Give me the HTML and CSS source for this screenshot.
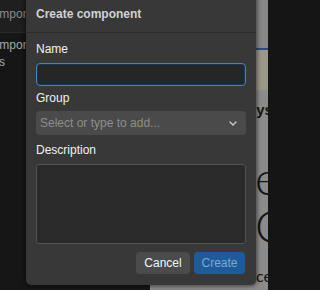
FILE: index.html
```html
<!DOCTYPE html>
<html lang="en">
<head>
<meta charset="utf-8">
<title>Create component</title>
<link rel="stylesheet" href="styles.css">
</head>
<body>
<div class="app">
  <aside class="sidebar">
    <div class="side-head"><span class="side-title">Components</span></div>
    <ul class="side-list">
      <li class="side-item">Components</li>
      <li class="side-item side-sub">Assets</li>
    </ul>
  </aside>
  <main class="main">
    <div class="main-head"></div>
    <div class="main-band"></div>
    <div class="main-body">
      <div class="frag-heading">Keys</div>
      <div class="frag-hero">
        <div class="hero-line">e</div>
        <div class="hero-line">Q</div>
      </div>
      <div class="frag-small">ce</div>
    </div>
  </main>
</div>

<div class="dialog" role="dialog" aria-label="Create component">
  <div class="dialog-head">Create component</div>
  <form class="dialog-body">
    <label class="label" for="name">Name</label>
    <input class="input input-focus" id="name" type="text">
    <label class="label label-group" for="group">Group</label>
    <div class="select" id="group">
      <span class="select-placeholder">Select or type to add...</span>
      <svg class="chevron" width="8" height="5" viewBox="0 0 8 5"><polyline points="1,1 4,4 7,1" fill="none" stroke="#cfcfcf" stroke-width="1.2" stroke-linecap="round" stroke-linejoin="round"/></svg>
    </div>
    <label class="label label-desc" for="desc">Description</label>
    <textarea class="textarea" id="desc"></textarea>
    <div class="actions">
      <button type="button" class="btn btn-cancel">Cancel</button>
      <button type="button" class="btn btn-create">Create</button>
    </div>
  </form>
</div>
</body>
</html>
```

FILE: styles.css
```css
html, body {
  margin: 0;
  padding: 0;
}
html {
  background: #151515;
}
body {
  width: 268px;
  height: 290px;
  overflow: hidden;
  position: relative;
  background: #151515;
  font-family: "Liberation Sans", Arial, sans-serif;
}
.app {
  display: flex;
  width: 268px;
  height: 290px;
  overflow: hidden;
}
.sidebar {
  width: 150px;
  flex: none;
  background: #161616;
  overflow: hidden;
}
.side-head {
  height: 33px;
  box-sizing: border-box;
  background: #1f1f1f;
  border-bottom: 1px solid #2a2a2a;
  padding-top: 7px;
  white-space: nowrap;
}
.side-title {
  display: block;
  margin-left: -16px;
  font-size: 12px;
  line-height: 15px;
  color: #8c8c8c;
}
.side-list {
  list-style: none;
  margin: 0;
  padding: 4px 0 0;
}
.side-item {
  font-size: 12px;
  line-height: 17px;
  color: #a8a8a8;
  white-space: nowrap;
  margin-left: -16px;
}
.side-sub {
  margin-left: -31px;
}
.main {
  flex: 1;
  min-width: 0;
  background: #8b8b8b;
  overflow: hidden;
}
.main-head {
  height: 48px;
  background: #878787;
  border-bottom: 2px solid #2d4a7a;
}
.main-band {
  height: 40px;
  background: #9a978b;
}
.main-body {
  padding-top: 11px;
  white-space: nowrap;
  color: #141414;
}
.frag-heading {
  margin-left: 87px;
  font-size: 15px;
  line-height: 17px;
  font-weight: 700;
}
.frag-hero {
  margin-top: 36px;
  margin-left: 105px;
  font-family: Lato, "Liberation Sans", sans-serif;
  font-weight: 300;
  font-size: 46px;
  line-height: 48px;
}
.frag-small {
  margin-top: 16px;
  margin-left: 106px;
  font-family: Lato, "Liberation Sans", sans-serif;
  font-size: 16px;
  line-height: 20px;
}

/* dialog */
.dialog {
  position: absolute;
  left: 26px;
  top: -6px;
  width: 230px;
  background: #383838;
  border-radius: 5px;
  box-shadow: 0 0 4px 1px rgba(0, 0, 0, 0.55);
  color: #eeeeee;
}
.dialog-head {
  height: 39px;
  box-sizing: border-box;
  display: flex;
  align-items: center;
  padding: 1px 10px 0;
  font-size: 12px;
  font-weight: 700;
  color: #d2d2d2;
  border-bottom: 1px solid #2b2b2b;
}
.dialog-body {
  display: flex;
  flex-direction: column;
  padding: 9px 10px 11px;
  margin: 0;
}
.label {
  font-size: 12px;
  line-height: 15px;
  color: #f2f2f2;
  margin-bottom: 6px;
}
.label-group {
  margin-top: 5px;
  margin-bottom: 5px;
}
.label-desc {
  margin-top: 8px;
}
.input {
  box-sizing: border-box;
  height: 23px;
  width: 100%;
  margin: 0;
  background: #262626;
  border: 1px solid #4a82c0;
  border-radius: 4px;
  box-shadow: inset 0 0 0 1px #1c3556;
  outline: none;
  color: #eeeeee;
  font: 12px "Liberation Sans", Arial, sans-serif;
}
.select {
  box-sizing: border-box;
  height: 24px;
  display: flex;
  align-items: center;
  justify-content: space-between;
  padding: 0 9px 0 4px;
  background: #4a4a4a;
  border-radius: 4px;
}
.select-placeholder {
  font-size: 12px;
  color: #8e8e8e;
}
.chevron {
  display: block;
}
.textarea {
  box-sizing: border-box;
  height: 80px;
  width: 100%;
  margin: 0;
  resize: none;
  background: #2a2a2a;
  border: 1px solid #525252;
  border-radius: 3px;
  outline: none;
  color: #eeeeee;
  font: 12px "Liberation Sans", Arial, sans-serif;
}
.actions {
  display: flex;
  justify-content: flex-end;
  gap: 4px;
  margin-top: 8px;
  padding-right: 1px;
}
.btn {
  height: 22px;
  border: none;
  border-radius: 4px;
  padding: 0;
  font: 12px "Liberation Sans", Arial, sans-serif;
}
.btn-cancel {
  width: 54px;
  background: #4b4b4b;
  color: #f4f4f4;
}
.btn-create {
  width: 51px;
  background: #1e5b9a;
  color: #7ea7d3;
}
```
